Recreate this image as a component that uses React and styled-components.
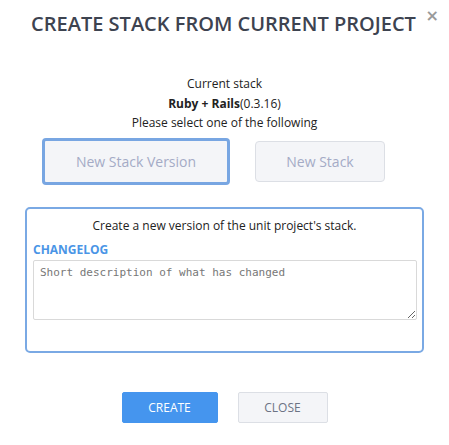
import React from "react";
import styled, { createGlobalStyle } from "styled-components";

const Global = createGlobalStyle`
  html, body { margin: 0; padding: 0; background: #fff; }
  body { font-family: "Open Sans", "Liberation Sans", sans-serif; color: #333; }
  * { box-sizing: border-box; }
`;

const Modal = styled.div`
  width: 449px;
  height: 445px;
  position: relative;
  padding-top: 10px;
`;

const Title = styled.h1`
  margin: 0;
  font-size: 20px;
  font-weight: 600;
  line-height: 27px;
  color: #3d4350;
  text-align: center;
  letter-spacing: 0;
  padding-right: 2px;
`;

const CloseX = styled.button`
  position: absolute;
  top: 6px;
  right: 10px;
  border: none;
  background: none;
  padding: 0;
  font-family: "DejaVu Sans", sans-serif;
  font-size: 16px;
  font-weight: bold;
  color: #9a9a9a;
  line-height: 20px;
  cursor: pointer;
`;

const Info = styled.div`
  margin-top: 37px;
  text-align: center;
  font-size: 12px;
  line-height: 19.5px;
  color: #222;
`;

const Choices = styled.div`
  display: flex;
  align-items: center;
  gap: 25px;
  padding-left: 42px;
  margin-top: 5px;
  height: 47px;
`;

const Choice = styled.button`
  font-family: "Open Sans", "Liberation Sans", sans-serif;
  font-size: 14px;
  color: #a4abc6;
  background: #f4f5f8;
  border: ${(p) => (p.$active ? "3px solid #78a6e2" : "1px solid #dcdfe5")};
  border-radius: 4px;
  height: ${(p) => (p.$active ? "47px" : "41px")};
  width: ${(p) => p.$w}px;
  padding: 0;
  cursor: pointer;
`;

const Panel = styled.div`
  margin: 22px 25px 0 25px;
  height: 146px;
  border: 2px solid #7aa9e4;
  border-radius: 5px;
  padding: 7px 6px 0 6px;
`;

const PanelText = styled.div`
  text-align: center;
  font-size: 12px;
  line-height: 20px;
  color: #222;
`;

const Label = styled.div`
  margin-top: 6px;
  font-size: 12px;
  font-weight: 700;
  line-height: 16px;
  color: #4a95e6;
`;

const TextArea = styled.textarea`
  display: block;
  margin-top: 2px;
  width: 384px;
  height: 60px;
  border: 1px solid #d9d9d9;
  border-radius: 2px;
  padding: 4px 6px;
  font-family: "DejaVu Sans Mono", "Liberation Mono", monospace;
  font-size: 11px;
  line-height: 15px;
  color: #333;
  resize: vertical;
  &::placeholder { color: #777; }
`;

const Actions = styled.div`
  display: flex;
  justify-content: center;
  gap: 20px;
  margin-top: 39px;
`;

const ActionButton = styled.button`
  font-family: "Open Sans", "Liberation Sans", sans-serif;
  font-size: 12px;
  height: 31px;
  width: ${(p) => p.$w}px;
  border-radius: 2px;
  cursor: pointer;
  background: ${(p) => (p.$primary ? "#4595ee" : "#f4f5f8")};
  color: ${(p) => (p.$primary ? "#fff" : "#6c7384")};
  border: 1px solid ${(p) => (p.$primary ? "#4595ee" : "#dcdfe5")};
`;

export default function App() {
  return (
    <>
      <Global />
      <Modal>
        <Title>CREATE STACK FROM CURRENT PROJECT</Title>
        <CloseX aria-label="close">×</CloseX>
        <Info>
          <div>Current stack</div>
          <div>
            <b>Ruby + Rails</b>(0.3.16)
          </div>
          <div>Please select one of the following</div>
        </Info>
        <Choices>
          <Choice $active $w={188}>New Stack Version</Choice>
          <Choice $w={130}>New Stack</Choice>
        </Choices>
        <Panel>
          <PanelText>Create a new version of the unit project's stack.</PanelText>
          <Label>CHANGELOG</Label>
          <TextArea placeholder="Short description of what has changed" />
        </Panel>
        <Actions>
          <ActionButton $primary $w={96}>CREATE</ActionButton>
          <ActionButton $w={90}>CLOSE</ActionButton>
        </Actions>
      </Modal>
    </>
  );
}
